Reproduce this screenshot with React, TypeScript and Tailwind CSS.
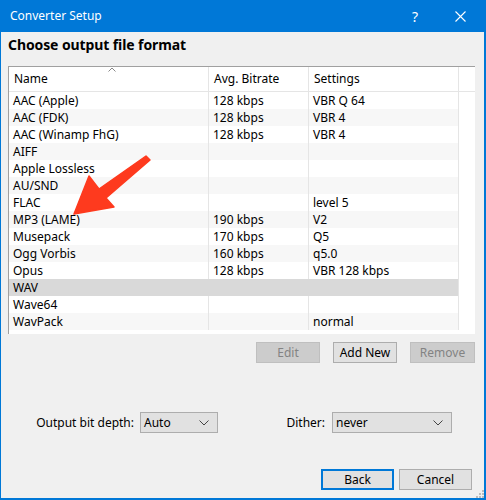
const rows = [
  { name: 'AAC (Apple)', bitrate: '128 kbps', settings: 'VBR Q 64' },
  { name: 'AAC (FDK)', bitrate: '128 kbps', settings: 'VBR 4' },
  { name: 'AAC (Winamp FhG)', bitrate: '128 kbps', settings: 'VBR 4' },
  { name: 'AIFF', bitrate: '', settings: '' },
  { name: 'Apple Lossless', bitrate: '', settings: '' },
  { name: 'AU/SND', bitrate: '', settings: '' },
  { name: 'FLAC', bitrate: '', settings: 'level 5' },
  { name: 'MP3 (LAME)', bitrate: '190 kbps', settings: 'V2' },
  { name: 'Musepack', bitrate: '170 kbps', settings: 'Q5' },
  { name: 'Ogg Vorbis', bitrate: '160 kbps', settings: 'q5.0' },
  { name: 'Opus', bitrate: '128 kbps', settings: 'VBR 128 kbps' },
  { name: 'WAV', bitrate: '', settings: '' },
  { name: 'Wave64', bitrate: '', settings: '' },
  { name: 'WavPack', bitrate: '', settings: 'normal' },
]

const Chevron = () => (
  <svg width="10" height="6" viewBox="0 0 10 6" className="text-[#444]">
    <polyline points="0.5,0.5 5,5 9.5,0.5" fill="none" stroke="currentColor" strokeWidth="1" />
  </svg>
)

function Select({ value, width }: { value: string; width: string }) {
  return (
    <div className={`${width} h-[21px] flex items-center justify-between pl-[3px] pr-[8px] bg-[#e1e1e1] border border-[#adadad]`}>
      <span>{value}</span>
      <Chevron />
    </div>
  )
}

export default function App() {
  return (
    <div className="w-[486px] h-[500px] bg-[#0078d7] flex flex-col text-[12px] text-black relative" style={{ fontFamily: '"Segoe UI", "Noto Sans", sans-serif' }}>
      {/* Title bar */}
      <div className="h-[32px] flex items-center text-white shrink-0">
        <span className="ml-[10px] flex-1">Converter Setup</span>
        <span className="w-[20px] text-center text-[14px] mr-[30px]">?</span>
        <svg width="11" height="11" viewBox="0 0 11 11" className="mr-[20px]">
          <path d="M0.5 0.5 L10.5 10.5 M10.5 0.5 L0.5 10.5" stroke="white" strokeWidth="1.1" />
        </svg>
      </div>

      <div className="flex-1 ml-[1px] mr-[2px] mb-[2px] bg-[#f0f0f0] flex flex-col pl-[7px] relative">
        <h1 className="font-bold text-[14px] leading-[20px] mt-[3px] h-[31px] tracking-[-0.1px]">Choose output file format</h1>

        {/* Table */}
        <div className="w-[467px] h-[268px] bg-white border-l border-t border-[#a0a0a0] flex flex-col relative">
          <svg width="8" height="5" viewBox="0 0 8 5" className="absolute left-[99px] top-[0px]">
            <polyline points="0.5,4.5 4,1 7.5,4.5" fill="none" stroke="#888" strokeWidth="1" />
          </svg>
          <div className="flex h-[25px] border-b border-[#e5e5e5] shrink-0">
            <div className="w-[200px] border-r border-[#e5e5e5] pl-[5px] flex items-center">Name</div>
            <div className="w-[100px] border-r border-[#e5e5e5] pl-[5px] flex items-center">Avg. Bitrate</div>
            <div className="w-[150px] border-r border-[#e5e5e5] pl-[5px] flex items-center">Settings</div>
            <div className="flex-1" />
          </div>
          {rows.map((r, i) => {
            const selected = r.name === 'WAV'
            const bg = selected ? 'bg-[#d9d9d9]' : i % 2 === 1 ? 'bg-[#f7f7f7]' : 'bg-white'
            const line = selected ? 'border-transparent' : 'border-[#e5e5e5]'
            return (
              <div key={r.name} className="flex h-[17px] shrink-0">
                <div className={`w-[200px] border-r ${line} ${bg} pl-[4px] flex items-center`}>{r.name}</div>
                <div className={`w-[100px] border-r ${line} ${bg} pl-[4px] flex items-center`}>{r.bitrate}</div>
                <div className={`w-[150px] border-r border-[#e5e5e5] ${bg} pl-[4px] flex items-center`}>{r.settings}</div>
                <div className="flex-1" />
              </div>
            )
          })}
        </div>

        {/* Table action buttons */}
        <div className="flex justify-end w-[467px] mt-[8px] gap-[13px]">
          <div className="w-[64px] h-[21px] flex items-center justify-center bg-[#cccccc] border border-[#bfbfbf] text-[#838383]">Edit</div>
          <div className="w-[64px] h-[21px] flex items-center justify-center bg-[#e1e1e1] border border-[#adadad]">Add New</div>
          <div className="w-[65px] h-[21px] flex items-center justify-center bg-[#cccccc] border border-[#bfbfbf] text-[#838383]">Remove</div>
        </div>

        {/* Options */}
        <div className="flex items-center mt-[49px] h-[21px] whitespace-nowrap">
          <span className="w-[126px] text-right mr-[6px]">Output bit depth:</span>
          <Select value="Auto" width="w-[78px]" />
          <span className="w-[107px] text-right mr-[7px]">Dither:</span>
          <Select value="never" width="w-[120px]" />
        </div>

        {/* Dialog buttons */}
        <div className="flex justify-end w-[464px] mt-[36px] gap-[5px]">
          <div className="w-[73px] h-[21px] flex items-center justify-center bg-[#e1e1e1] border-2 border-[#0078d7]">Back</div>
          <div className="w-[73px] h-[21px] flex items-center justify-center bg-[#e1e1e1] border border-[#adadad]">Cancel</div>
        </div>

        {/* Resize grip */}
        <svg width="8" height="8" viewBox="0 0 8 8" className="absolute right-[0px] bottom-[0px]">
          <rect x="6" y="0" width="2" height="2" fill="#bcbcbc" />
          <rect x="3" y="3" width="2" height="2" fill="#bcbcbc" />
          <rect x="6" y="3" width="2" height="2" fill="#bcbcbc" />
          <rect x="0" y="6" width="2" height="2" fill="#bcbcbc" />
          <rect x="3" y="6" width="2" height="2" fill="#bcbcbc" />
          <rect x="6" y="6" width="2" height="2" fill="#bcbcbc" />
        </svg>
      </div>

      {/* Annotation arrow */}
      <svg width="100" height="75" viewBox="60 150 100 75" className="absolute left-[60px] top-[150px] pointer-events-none">
        <polygon
          points="74,214 89,176 99,189 146,156 150,160 106,198 114,207"
          fill="#fe3a1e"
          stroke="#fe3a1e"
          strokeWidth="1.5"
          strokeLinejoin="round"
        />
      </svg>
    </div>
  )
}
